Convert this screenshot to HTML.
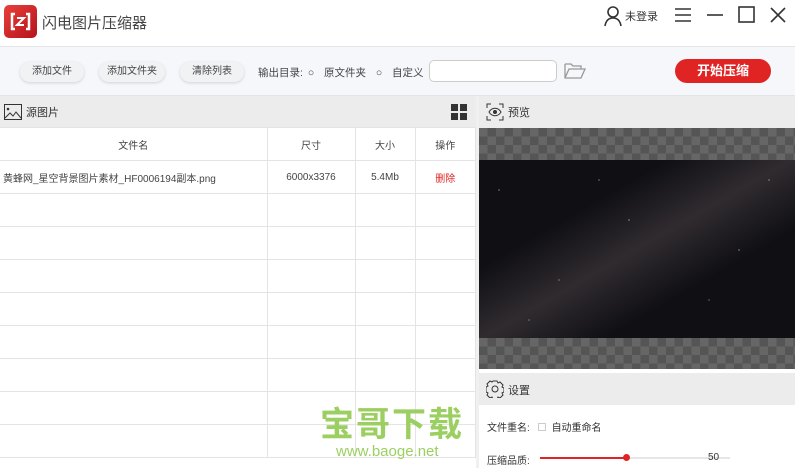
<!DOCTYPE html>
<html><head><meta charset="utf-8"><style>
*{margin:0;padding:0;box-sizing:border-box}
body{width:795px;height:468px;overflow:hidden;background:#fff;font-family:"Liberation Sans","Noto Sans CJK SC",sans-serif;color:#333;position:relative;font-size:11px}
.a{position:absolute}
.btn{position:absolute;top:62px;height:20px;border-radius:10px;background:#f0f2f4;box-shadow:0 1px 3px rgba(0,0,0,.15);font-size:10px;color:#444;text-align:center;line-height:20px}
table{border-collapse:collapse;position:absolute;left:0;top:127px;width:476px}
td{border:1px solid #e4e4e4;height:33px;font-size:10px;text-align:center;color:#444}
tr td:first-child{border-left:none}
.chk{background-color:#666;background-image:linear-gradient(45deg,#555 25%,transparent 25%,transparent 75%,#555 75%),linear-gradient(45deg,#555 25%,transparent 25%,transparent 75%,#555 75%);background-size:17px 17px;background-position:0 0,8.5px 8.5px}
.stars{background-image:radial-gradient(1px 1px at 20px 30px,#ccc,transparent),radial-gradient(1px 1px at 80px 120px,#bbb,transparent),radial-gradient(1px 1px at 150px 60px,#ddd,transparent),radial-gradient(1px 1px at 230px 140px,#aaa,transparent),radial-gradient(1px 1px at 290px 20px,#ccc,transparent),radial-gradient(1px 1px at 120px 20px,#bbb,transparent),radial-gradient(1px 1px at 50px 160px,#aaa,transparent),radial-gradient(1px 1px at 260px 90px,#ccc,transparent);background-size:316px 178px}
</style></head><body>
<div class="a" style="left:4px;top:5px;width:33px;height:33px;border-radius:5px;background:linear-gradient(135deg,#e8403a,#b5121b)"></div>
<svg class="a" style="left:9px;top:12px" width="23" height="19" viewBox="0 0 23 19"><path d="M6 2H3v15h3M17 2h3v15h-3" stroke="#fff" stroke-width="2.5" fill="none"/><path d="M8 6h7l-7 7h7" stroke="#fff" stroke-width="2" fill="none"/></svg>
<div class="a" style="left:42px;top:12px;font-size:15px;color:#444">闪电图片压缩器</div>
<svg class="a" style="left:603px;top:5px" width="22" height="22" viewBox="0 0 22 22"><circle cx="10" cy="7" r="5" stroke="#333" stroke-width="1.6" fill="none"/><path d="M2 21c1-6 4-8 8-8s7 2 8 8" stroke="#333" stroke-width="1.6" fill="none"/></svg>
<div class="a" style="left:625px;top:8px;font-size:11px">未登录</div>
<svg class="a" style="left:674px;top:7px" width="18" height="16"><path d="M1 2h16M1 8h16M1 14h16" stroke="#333" stroke-width="1.6"/></svg>
<svg class="a" style="left:706px;top:7px" width="18" height="16"><path d="M1 8h16" stroke="#333" stroke-width="1.6"/></svg>
<svg class="a" style="left:738px;top:6px" width="18" height="18"><rect x="1" y="1" width="15" height="15" stroke="#333" stroke-width="1.6" fill="none"/></svg>
<svg class="a" style="left:770px;top:7px" width="16" height="16"><path d="M1 1l14 14M15 1L1 15" stroke="#333" stroke-width="1.6"/></svg>
<div class="a" style="left:0;top:46px;width:795px;height:50px;background:#f5f7fa;border-top:1px solid #e2e4e8;border-bottom:1px solid #e2e4e8"></div>
<div class="btn" style="left:20px;width:64px">添加文件</div>
<div class="btn" style="left:99px;width:66px">添加文件夹</div>
<div class="btn" style="left:180px;width:64px">清除列表</div>
<div class="a" style="left:258px;top:65px;font-size:10.5px;color:#444;word-spacing:2px">输出目录: ○&nbsp; 原文件夹&nbsp; ○&nbsp; 自定义</div>
<div class="a" style="left:429px;top:60px;width:128px;height:22px;border:1px solid #ccc;border-radius:5px;background:#fff"></div>
<svg class="a" style="left:564px;top:63px" width="22" height="16" viewBox="0 0 22 16"><path d="M1 1h6l2 2h8v3M1 1v14h16l4-9H5L1 15" stroke="#999" stroke-width="1.3" fill="none"/></svg>
<div class="a" style="left:675px;top:59px;width:96px;height:24px;border-radius:12px;background:#e02424;color:#fff;font-size:13px;font-weight:bold;text-align:center;line-height:24px">开始压缩</div>
<div class="a" style="left:0;top:96px;width:476px;height:32px;background:#ececec"></div>
<svg class="a" style="left:4px;top:104px" width="18" height="16" viewBox="0 0 18 16"><rect x=".5" y=".5" width="17" height="15" stroke="#333" fill="none"/><circle cx="4" cy="5" r="1.3" fill="#333"/><path d="M1 14l5-5 3 3 3-4 5 6" stroke="#333" fill="none"/></svg>
<div class="a" style="left:26px;top:104px;font-size:11px">源图片</div>
<svg class="a" style="left:451px;top:104px" width="16" height="16"><rect x="0" y="0" width="7" height="7" fill="#333"/><rect x="9" y="0" width="7" height="7" fill="#333"/><rect x="0" y="9" width="7" height="7" fill="#333"/><rect x="9" y="9" width="7" height="7" fill="#333"/></svg>
<table>
<tr><td style="width:267px">文件名</td><td style="width:88px">尺寸</td><td style="width:60px">大小</td><td>操作</td></tr>
<tr><td style="text-align:left;padding-left:3px">黄蜂网_星空背景图片素材_HF0006194副本.png</td><td>6000x3376</td><td>5.4Mb</td><td style="color:#e02424">删除</td></tr>
<tr><td></td><td></td><td></td><td></td></tr><tr><td></td><td></td><td></td><td></td></tr><tr><td></td><td></td><td></td><td></td></tr><tr><td></td><td></td><td></td><td></td></tr><tr><td></td><td></td><td></td><td></td></tr><tr><td></td><td></td><td></td><td></td></tr><tr><td></td><td></td><td></td><td></td></tr><tr><td></td><td></td><td></td><td></td></tr>
</table>
<div class="a" style="left:476px;top:96px;width:3px;height:372px;background:#f0f0f0"></div>
<div class="a" style="left:479px;top:96px;width:316px;height:32px;background:#ececec"></div>
<svg class="a" style="left:486px;top:103px" width="18" height="18" viewBox="0 0 18 18"><path d="M1 5V1h4M13 1h4v4M17 13v4h-4M5 17H1v-4" stroke="#333" fill="none"/><path d="M3 9c3-5 9-5 12 0-3 5-9 5-12 0z" stroke="#333" fill="none"/><circle cx="9" cy="9" r="2" fill="#333"/></svg>
<div class="a" style="left:508px;top:104px;font-size:11px">预览</div>
<div class="a chk" style="left:479px;top:128px;width:316px;height:32px"></div>
<div class="a" style="left:479px;top:160px;width:316px;height:178px;background:linear-gradient(150deg,transparent 30%,rgba(70,62,66,.6) 50%,transparent 70%),#0f0f14"></div>
<div class="a stars" style="left:479px;top:160px;width:316px;height:178px"></div>
<div class="a chk" style="left:479px;top:338px;width:316px;height:31px"></div>
<div class="a" style="left:479px;top:373px;width:316px;height:32px;background:#ececec"></div>
<svg class="a" style="left:486px;top:380px" width="18" height="18" viewBox="0 0 18 18"><path d="M7 1h4l1 2 2-1 3 3-1 2 2 1v4l-2 1 1 2-3 3-2-1-1 2H7l-1-2-2 1-3-3 1-2-2-1V7l2-1-1-2 3-3 2 1z" stroke="#333" fill="none"/><circle cx="9" cy="9" r="3" stroke="#333" fill="none"/></svg>
<div class="a" style="left:508px;top:382px;font-size:11px">设置</div>
<div class="a" style="left:487px;top:419px;font-size:10px">文件重名: <span style="display:inline-block;width:8px;height:8px;border:1px solid #ccc;margin:0 6px 0 5px"></span>自动重命名</div>
<div class="a" style="left:487px;top:452px;font-size:10px">压缩品质:</div>
<div class="a" style="left:540px;top:457px;width:190px;height:2px;background:#e6e6e6"></div>
<div class="a" style="left:540px;top:457px;width:86px;height:2px;background:#e02424"></div>
<div class="a" style="left:623px;top:454px;width:7px;height:7px;border-radius:50%;background:#e02424"></div>
<div class="a" style="left:708px;top:452px;font-size:10px">50</div>
<div class="a" style="left:320px;top:405px;font-size:34px;font-weight:bold;color:#9ccf62;letter-spacing:2px;line-height:40px">宝哥下载</div>
<div class="a" style="left:336px;top:443px;font-size:15px;color:#9ccf62">www.baoge.net</div>
</body></html>
